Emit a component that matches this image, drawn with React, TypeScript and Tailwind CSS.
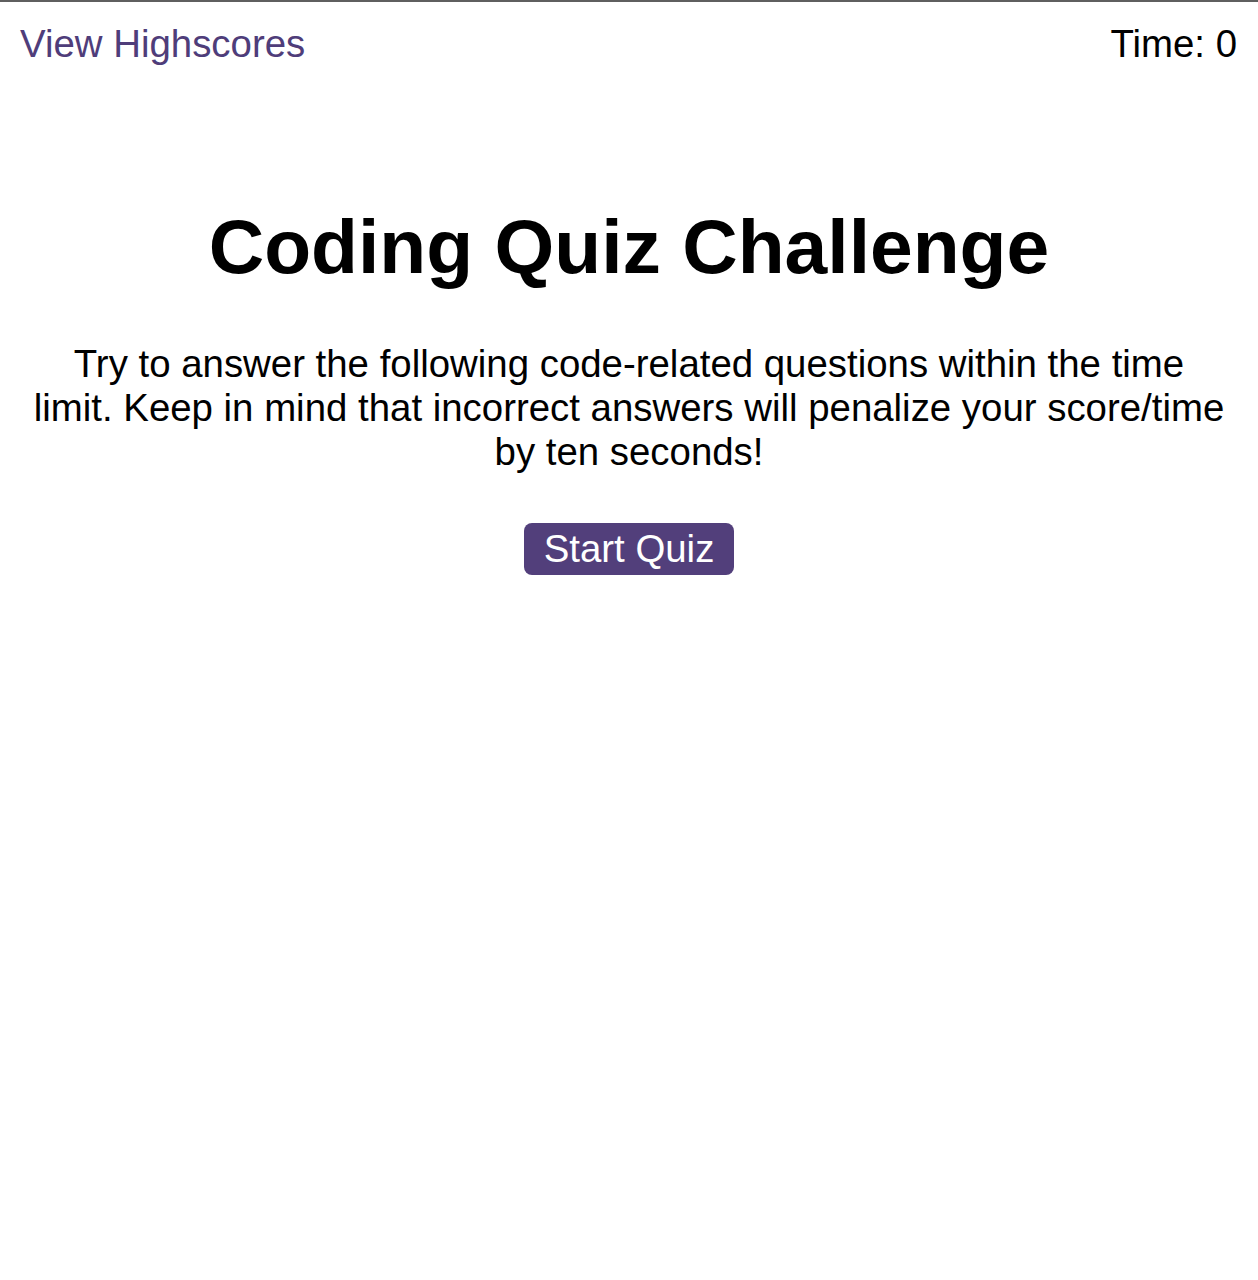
import React from "react";

const App = () => {
  const [time] = React.useState(0);

  return (
    <div className="min-h-[1280px] bg-white border-t-2 border-[#5f5f5f] font-['Liberation_Sans',Arial,sans-serif] text-black">
      <header className="flex justify-between items-start px-[20px] pt-[20px] text-[38.4px] leading-[44px]">
        <a href="#" className="text-[#4f3d7a]">
          View Highscores
        </a>
        <div className="pr-[1px]">Time: {time}</div>
      </header>

      <main className="flex flex-col items-center text-center px-[20px] mt-[136px]">
        <h1 className="text-[76.8px] leading-[88px] font-bold">Coding Quiz Challenge</h1>
        <p className="mt-[52px] text-[38.4px] leading-[44px] max-w-[1192px]">
          Try to answer the following code-related questions within the time limit. Keep in mind that
          incorrect answers will penalize your score/time by ten seconds!
        </p>
        <button className="mt-[49px] bg-[#523f7b] text-white text-[38.4px] leading-[44px] px-[20px] py-[4px] rounded-[8px]">
          Start Quiz
        </button>
      </main>
    </div>
  );
};

export default App;
